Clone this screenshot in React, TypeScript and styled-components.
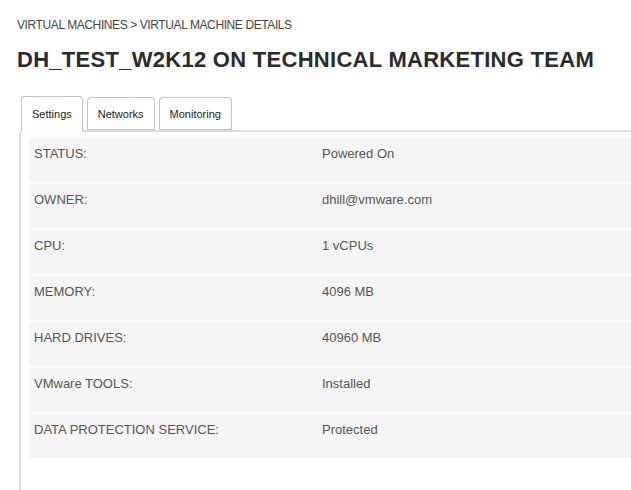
import React from 'react';
import styled, { createGlobalStyle } from 'styled-components';

const GlobalStyle = createGlobalStyle`
	html, body {
		margin: 0;
		padding: 0;
		background: #ffffff;
		font-family: "Liberation Sans", Arial, sans-serif;
		overflow: hidden;
	}
`;

const details = [
	{ label: 'STATUS:', value: 'Powered On' },
	{ label: 'OWNER:', value: 'dhill@vmware.com' },
	{ label: 'CPU:', value: '1 vCPUs' },
	{ label: 'MEMORY:', value: '4096 MB' },
	{ label: 'HARD DRIVES:', value: '40960 MB' },
	{ label: 'VMware TOOLS:', value: 'Installed' },
	{ label: 'DATA PROTECTION SERVICE:', value: 'Protected' },
];

const tabs = ['Settings', 'Networks', 'Monitoring'];

export const Page = styled.div`
	width: 631px;
	height: 490px;
	padding: 17px 0 0 17px;
	box-sizing: border-box;
`;

export const Breadcrumb = styled.div`
	font-size: 12px;
	color: #444;
	line-height: 16px;
	letter-spacing: -0.4px;
`;

export const Title = styled.h1`
	margin: 13px 0 0 0;
	font-size: 22px;
	font-weight: bold;
	color: #2b2b2b;
	line-height: 28px;
	letter-spacing: 0.28px;
`;

export const TabBar = styled.div`
	display: flex;
	align-items: flex-end;
	gap: 4px;
	margin: 22px 0 0 4px;
	border-bottom: 2px solid #dcdcdc;
	height: 34px;
`;

export const Tab = styled.div<{ active?: boolean }>`
	padding: 0 10px;
	display: flex;
	align-items: center;
	font-size: 11px;
	color: #222;
	background: #fff;
	border: 1px solid #c4c4c4;
	border-bottom: ${({ active }) => (active ? '1px solid #fff' : '1px solid #c4c4c4')};
	border-radius: 4px 4px 0 0;
	box-shadow: 0 0 1px rgba(0, 0, 0, 0.15);
	margin-bottom: ${({ active }) => (active ? '-2px' : '0')};
	padding-bottom: ${({ active }) => (active ? '1px' : '0')};
	box-sizing: border-box;
	height: ${({ active }) => (active ? '36px' : '33px')};
`;

export const Panel = styled.div`
	margin-left: 2px;
	border-left: 2px solid #dcdcdc;
	padding: 6px 0 40px 8px;
	display: flex;
	flex-direction: column;
	gap: 2px;
`;

export const Row = styled.div`
	display: grid;
	grid-template-columns: 288px 1fr;
	height: 44px;
	padding: 8px 0 0 5px;
	box-sizing: border-box;
	background: #f5f5f5;
	font-size: 13px;
	line-height: 16px;
	color: #555;
`;

export const Label = styled.span`
	color: #555;
`;

export const Value = styled.span`
	color: #555;
`;

export default function App() {
	return (
		<Page>
			<GlobalStyle />
			<Breadcrumb>VIRTUAL MACHINES &gt; VIRTUAL MACHINE DETAILS</Breadcrumb>
			<Title>DH_TEST_W2K12 ON TECHNICAL MARKETING TEAM</Title>
			<TabBar>
				{tabs.map((tab, index) => (
					<Tab key={tab} active={index === 0}>
						{tab}
					</Tab>
				))}
			</TabBar>
			<Panel>
				{details.map((item) => (
					<Row key={item.label}>
						<Label>{item.label}</Label>
						<Value>{item.value}</Value>
					</Row>
				))}
			</Panel>
		</Page>
	);
}
